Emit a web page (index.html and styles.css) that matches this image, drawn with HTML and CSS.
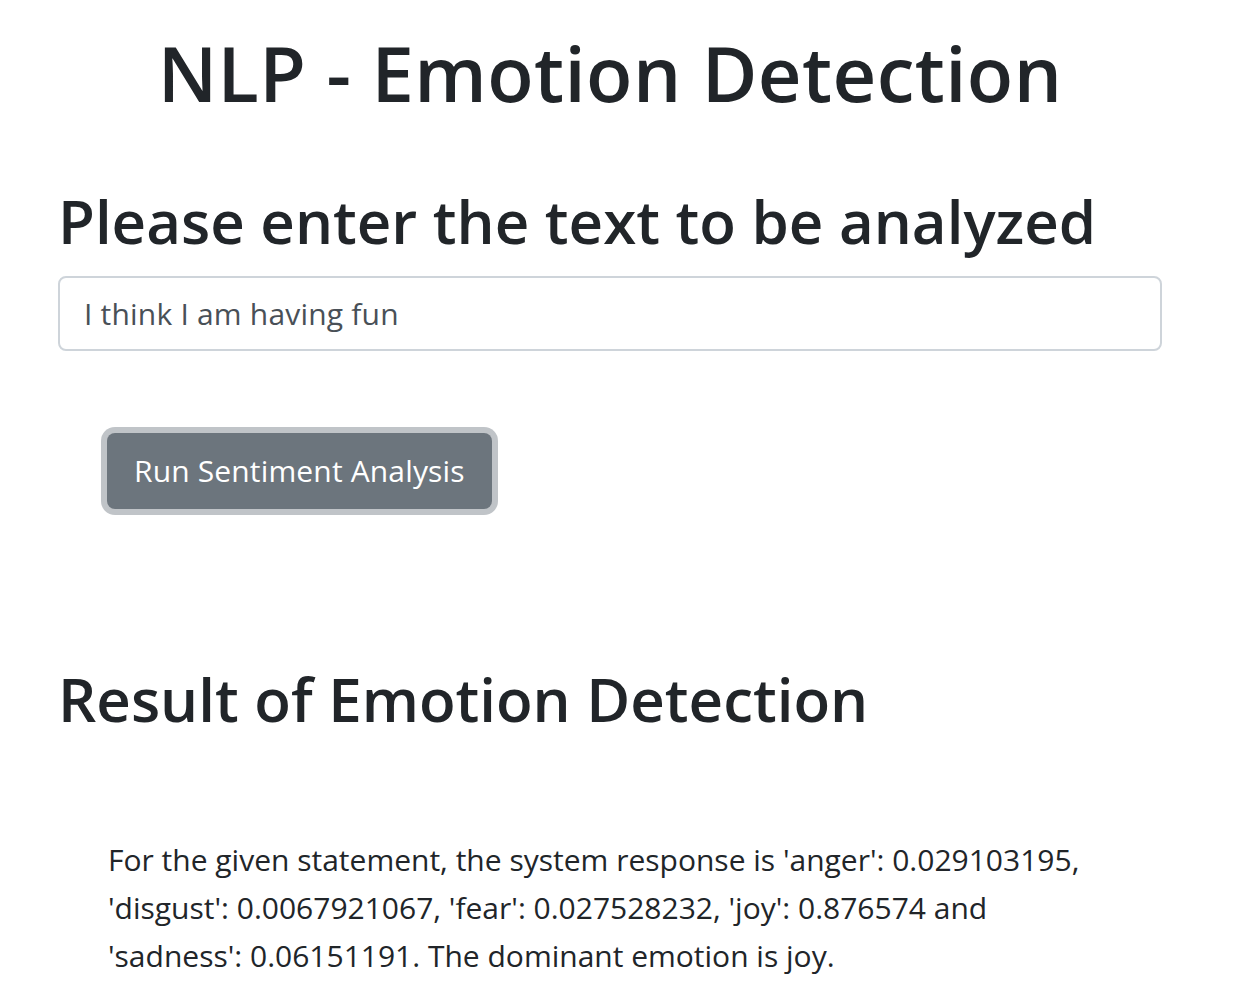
FILE: index.html
```html
<!DOCTYPE html>
<html lang="en">
<head>
<meta charset="utf-8">
<title>NLP - Emotion Detection</title>
<link rel="stylesheet" href="styles.css">
</head>
<body>
<div class="page">
  <h1 class="title">NLP - Emotion Detection</h1>
  <h2 class="heading heading-first">Please enter the text to be analyzed</h2>
  <input class="text-input" type="text" value="I think I am having fun">
  <div class="actions">
    <button class="btn" type="button">Run Sentiment Analysis</button>
  </div>
  <h2 class="heading heading-result">Result of Emotion Detection</h2>
  <p class="result">For the given statement, the system response is 'anger': 0.029103195, 'disgust': 0.0067921067, 'fear': 0.027528232, 'joy': 0.876574 and 'sadness': 0.06151191. The dominant emotion is joy.</p>
</div>
</body>
</html>
```

FILE: styles.css
```css
html, body {
  margin: 0;
  padding: 0;
  background: #ffffff;
}
body {
  font-family: "Open Sans", "Noto Sans", sans-serif;
  color: #212529;
}
.page {
  width: 1104px;
  margin-left: 58px;
  display: flex;
  flex-direction: column;
  align-items: flex-start;
}
.title {
  align-self: stretch;
  margin: 27px 0 0 0;
  text-align: center;
  font-size: 76px;
  font-weight: 600;
  line-height: 1.2;
  letter-spacing: 0.4px;
}
.heading {
  margin: 0;
  font-size: 60px;
  font-weight: 600;
  line-height: 1.2;
  letter-spacing: 0;
}
.heading-first {
  margin-top: 67px;
}
.text-input {
  box-sizing: border-box;
  width: 1104px;
  height: 75px;
  margin-top: 19px;
  padding: 0 24px;
  border: 2px solid #ced4da;
  border-radius: 8px;
  font-family: inherit;
  font-size: 30px;
  letter-spacing: 0.2px;
  color: #495057;
  background: #fff;
  outline: none;
}
.actions {
  padding: 82px 0 0 49px;
}
.btn {
  box-sizing: border-box;
  display: flex;
  align-items: center;
  height: 76px;
  padding: 0 27px;
  border: none;
  border-radius: 8px;
  background: #6c757d;
  box-shadow: 0 0 0 6px rgba(130, 138, 145, 0.5);
  color: #ffffff;
  font-family: inherit;
  font-size: 30px;
  letter-spacing: 0.15px;
  line-height: 1;
  cursor: pointer;
}
.heading-result {
  margin-top: 154px;
}
.result {
  width: 1004px;
  margin: 101px 0 0 50px;
  font-size: 30px;
  line-height: 48px;
}
```
